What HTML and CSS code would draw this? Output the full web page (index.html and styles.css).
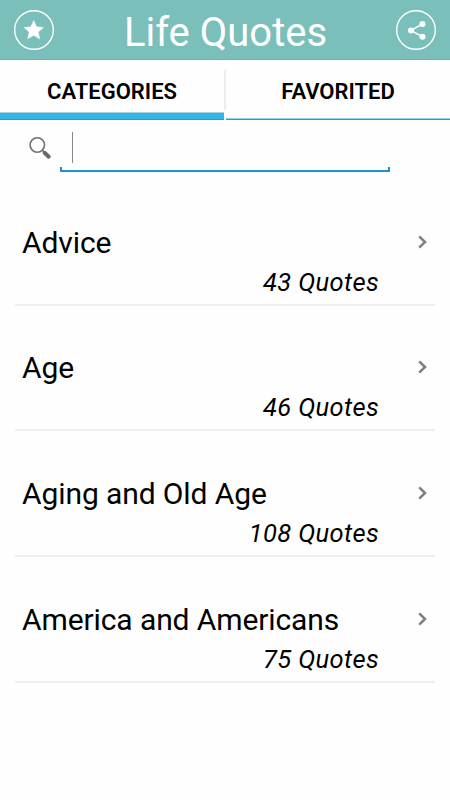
FILE: index.html
```html
<!DOCTYPE html>
<html lang="en">
<head>
    <meta charset="UTF-8">
    <meta name="viewport" content="width=device-width, initial-scale=1.0">
    <title>Life Quotes</title>
    <link rel="stylesheet" href="styles.css">
</head>
<body>
    <header class="header">
        <button class="icon-btn" aria-label="Rate">
            <svg width="40" height="40" viewBox="0 0 40 40">
                <circle cx="20" cy="20" r="19.3" fill="none" stroke="#fff" stroke-width="1.4"/>
                <path d="M19.7 10.5l2.8 6.3 6.9.7-5.2 4.6 1.5 6.7-6-3.5-6 3.5 1.5-6.7-5.2-4.6 6.9-.7z" fill="#fff" stroke="#fff" stroke-width=".5"/>
            </svg>
        </button>
        <h1 class="title">Life Quotes</h1>
        <button class="icon-btn" aria-label="Share">
            <svg width="40" height="40" viewBox="0 0 40 40">
                <circle cx="20" cy="20" r="19.3" fill="none" stroke="#fff" stroke-width="1.4"/>
                <path d="M26.5 14L15 20.4l11.5 6.4" fill="none" stroke="#fff" stroke-width="1.5"/>
                <g fill="#fff">
                    <circle cx="26.5" cy="14" r="3"/>
                    <circle cx="15" cy="20.4" r="3"/>
                    <circle cx="26.5" cy="26.8" r="3"/>
                </g>
            </svg>
        </button>
    </header>

    <nav class="tabs">
        <div class="tab active">CATEGORIES</div>
        <div class="divider"></div>
        <div class="tab">FAVORITED</div>
    </nav>

    <div class="search">
        <svg class="search-icon" width="24" height="24" viewBox="0 0 24 24">
            <circle cx="9.3" cy="9" r="7.2" fill="none" stroke="#707070" stroke-width="1.6"/>
            <path d="M14 14l3 3" stroke="#707070" stroke-width="1.6"/>
            <path d="M16.6 16.8l4.1 3.9" stroke="#68686c" stroke-width="4" stroke-linecap="round"/>
        </svg>
        <div class="search-field">
            <div class="caret"></div>
        </div>
    </div>

    <ul class="list">
        <li class="row">
            <div class="name">Advice</div>
            <svg class="arrow" width="10" height="14" viewBox="0 0 10 14"><path d="M1.2 1.4L7 7l-5.8 5.6" fill="none" stroke="#808080" stroke-width="2.6"/></svg>
            <div class="count">43 Quotes</div>
        </li>
        <li class="row">
            <div class="name">Age</div>
            <svg class="arrow" width="10" height="14" viewBox="0 0 10 14"><path d="M1.2 1.4L7 7l-5.8 5.6" fill="none" stroke="#808080" stroke-width="2.6"/></svg>
            <div class="count">46 Quotes</div>
        </li>
        <li class="row">
            <div class="name">Aging and Old Age</div>
            <svg class="arrow" width="10" height="14" viewBox="0 0 10 14"><path d="M1.2 1.4L7 7l-5.8 5.6" fill="none" stroke="#808080" stroke-width="2.6"/></svg>
            <div class="count">108 Quotes</div>
        </li>
        <li class="row">
            <div class="name">America and Americans</div>
            <svg class="arrow" width="10" height="14" viewBox="0 0 10 14"><path d="M1.2 1.4L7 7l-5.8 5.6" fill="none" stroke="#808080" stroke-width="2.6"/></svg>
            <div class="count">75 Quotes</div>
        </li>
    </ul>
</body>
</html>
```
FILE: styles.css
```css
:root {
    --teal: #7abfba;
    --blue: #33b5e5;
}

* {
    margin: 0;
    padding: 0;
    box-sizing: border-box;
}

body {
    background: #fefefe;
    color: #000;
    font-family: Roboto, sans-serif;
    height: 800px;
    overflow: hidden;
}

.header {
    display: flex;
    justify-content: space-between;
    align-items: center;
    height: 60px;
    padding: 0 14px;
    background: var(--teal);
    border-bottom: 1px solid #72b5ae;
}

.icon-btn {
    width: 40px;
    height: 40px;
    background: none;
    border: none;
}

.icon-btn svg {
    display: block;
}

.title {
    color: #fff;
    font-size: 40px;
    font-weight: 400;
    line-height: 60px;
    padding: 6px 0 0 1px;
}

.tabs {
    display: flex;
    height: 60px;
}

.tab {
    flex: 1;
    text-align: center;
    font-size: 22px;
    font-weight: 600;
    line-height: 63px;
    border-bottom: 1px solid #1f9fd4;
    box-shadow: inset 0 -1px #8fd0ec;
}

.tab.active {
    border-bottom: 1px solid #1f9fd4;
    box-shadow: inset 0 -6px var(--blue), inset 0 -7px #a9cfdd;
}

.divider {
    width: 2px;
    height: 40px;
    margin-top: 10px;
    background: #ededed;
}

.search {
    display: flex;
    height: 52px;
    padding-left: 28px;
}

.search-icon {
    margin-top: 16px;
}

.search-field {
    position: relative;
    width: 330px;
    height: 52px;
    margin-left: 8px;
    padding: 12px 0 0 12px;
    border-bottom: 2px solid #1c94cf;
}

/* upturned ends of the field underline */
.search-field::before,
.search-field::after {
    content: "";
    position: absolute;
    bottom: 0;
    width: 2px;
    height: 3px;
    background: #1c94cf;
}

.search-field::before {
    left: 0;
}

.search-field::after {
    right: 0;
}

.caret {
    width: 1px;
    height: 31px;
    background: #888;
}

.list {
    list-style: none;
    margin: 8px 15px 0;
}

.row {
    display: grid;
    grid-template-columns: 1fr auto;
    align-content: end;
    height: 125.67px;
    padding: 0 7px 2px 7px;
    border-bottom: 2px solid #efefef;
}

.name {
    font-size: 30px;
    letter-spacing: -0.1px;
    line-height: 40px;
}

.arrow {
    margin-top: 12px;
}

.count {
    grid-column: 1 / 3;
    padding-right: 49px;
    text-align: right;
    font-size: 25.5px;
    font-style: italic;
    letter-spacing: 0.35px;
    line-height: 39px;
}
```
